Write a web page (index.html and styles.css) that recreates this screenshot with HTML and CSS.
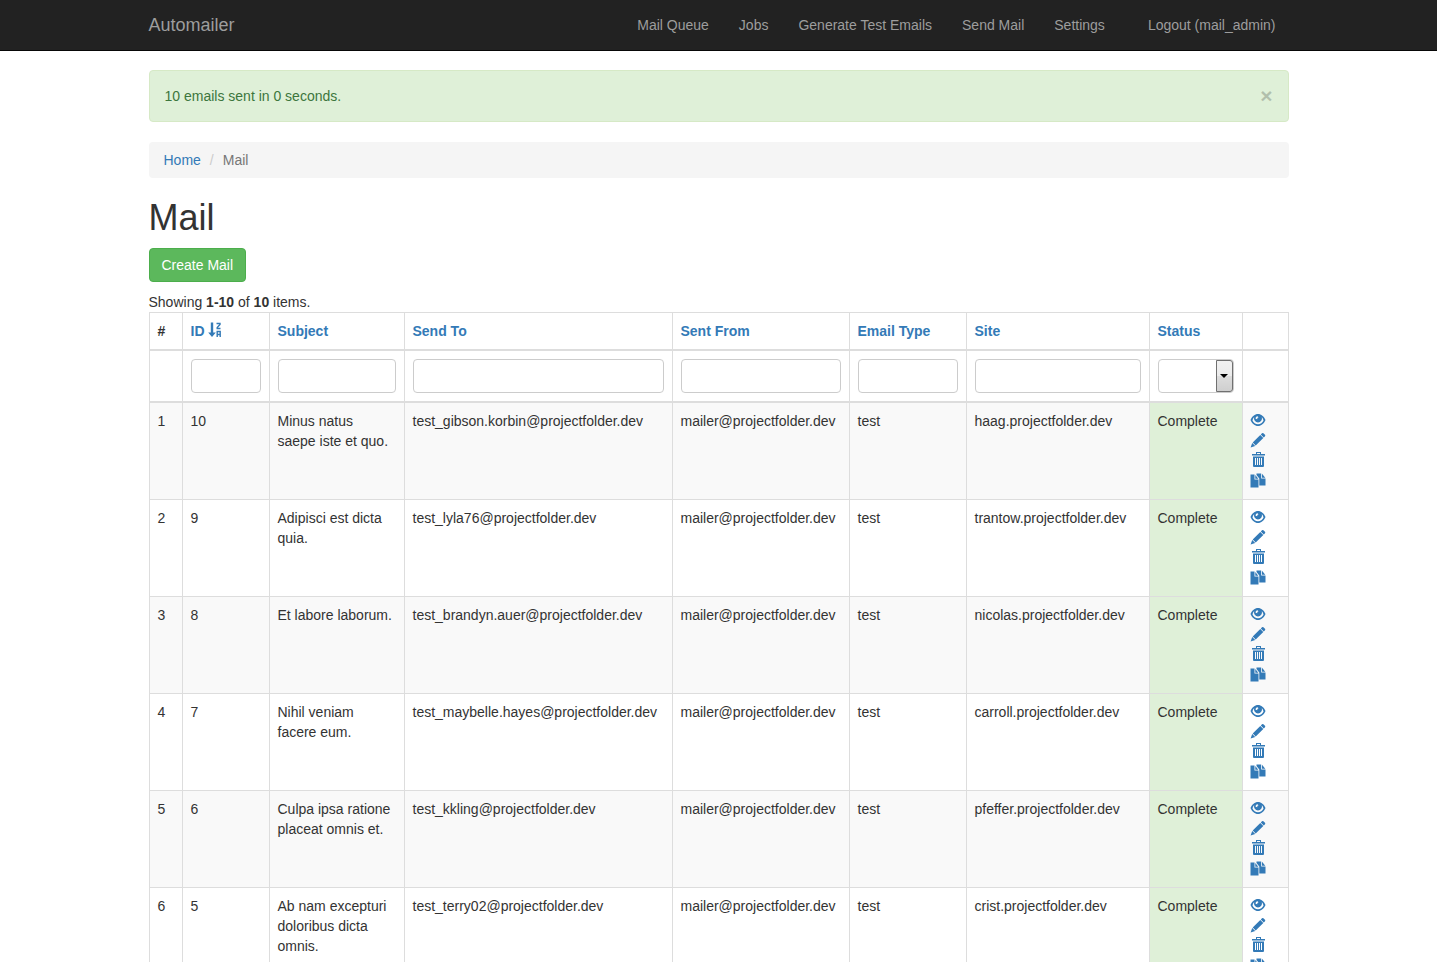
FILE: index.html
```html
<!DOCTYPE html>
<html lang="en">
<head>
<meta charset="utf-8">
<meta name="viewport" content="width=device-width, initial-scale=1">
<title>Mail</title>
<link rel="stylesheet" href="styles.css">
</head>
<body>
<svg class="sprite" aria-hidden="true">
  <symbol id="eye" viewBox="0 -1 16 16">
    <path fill-rule="evenodd" d="M0.5 7C2 3.500 4.800 1 8 1S14 3.500 15.500 7C14 10.500 11.200 13 8 13S2 10.500 0.500 7ZM2.500 7.500C3.500 9.800 5.500 11.200 8 11.200S12.500 9.800 13.500 7.500C13.200 6 12.500 4.800 11.800 4.200A4 4 0 1 1 4.200 4.200C3.500 4.800 2.800 6 2.500 7.500ZM7.500 3.200C6.300 3.400 5.500 4.400 5.600 5.700L7.200 6.200C7.200 5.300 7.700 4.600 8.600 4.300Z"/>
  </symbol>
  <symbol id="pencil" viewBox="0 -1 16 16">
    <path d="M12 0.200Q12.700 -0.400 13.400 0.200L15 1.800Q15.600 2.500 15 3.200L13.800 4.400L10.800 1.400ZM10.300 1.900L13.300 4.900L5.700 12.400L2.700 9.400ZM2.200 10L5.200 13L0.600 14.500Z"/>
  </symbol>
  <symbol id="trash" viewBox="0 0 16 16">
    <path fill-rule="evenodd" d="M6 0H11V2H15V3.500H2V2H6ZM7 1V2H10V1ZM3 4.500H14V14Q14 15 13 15H4Q3 15 3 14ZM5 6V13H6V6ZM7 6V13H8V6ZM9 6V13H10V6ZM11 6V13H12V6Z"/>
  </symbol>
  <symbol id="copy" viewBox="0 -1 16 16">
    <path d="M0.500 1.500H4.500V6.500H8.500V14.500H0.500ZM5.300 2L8.300 5.700H5.300ZM6.500 0.500H11.200V5.500H15.500V12.500H9.300V5.500L6.500 2ZM12 0.800L15.300 4.700H12Z"/>
  </symbol>
  <symbol id="sort-desc" viewBox="0 0 14 16">
    <path d="M2.800 0.500H5.200V10.500H7.800L4 15L0.200 10.500H2.800Z"/>
    <path fill="none" stroke="currentColor" stroke-width="1.400" d="M8.500 1.500H12V2.500L9.200 5.500V6.500H12.500M9.200 15V9.500H12.200V15M9.200 12.500H12.200"/>
  </symbol>
</svg>

<nav class="navbar">
  <div class="container navbar-inner">
    <a class="brand" href="#">Automailer</a>
    <ul class="nav">
      <li><a href="#">Mail Queue</a></li>
      <li><a href="#">Jobs</a></li>
      <li><a href="#">Generate Test Emails</a></li>
      <li><a href="#">Send Mail</a></li>
      <li><a href="#">Settings</a></li>
      <li><button class="logout" type="button">Logout (mail_admin)</button></li>
    </ul>
  </div>
</nav>

<main class="container">
  <div class="alert" role="status">
    <span>10 emails sent in 0 seconds.</span>
    <button class="close" type="button" aria-label="Close">×</button>
  </div>
  <ul class="breadcrumb">
    <li><a href="#">Home</a></li>
    <li>Mail</li>
  </ul>
  <h1>Mail</h1>
  <button class="create" type="button">Create Mail</button>
  <div class="summary">Showing <b>1-10</b> of <b>10</b> items.</div>
  <table class="grid">
    <colgroup>
      <col class="c-num"><col class="c-id"><col class="c-subject"><col class="c-to"><col class="c-from"><col class="c-type"><col class="c-site"><col class="c-status"><col class="c-actions">
    </colgroup>
    <thead>
      <tr>
        <th>#</th>
        <th><a href="#">ID <svg class="sort"><use href="#sort-desc"/></svg></a></th>
        <th><a href="#">Subject</a></th>
        <th><a href="#">Send To</a></th>
        <th><a href="#">Sent From</a></th>
        <th><a href="#">Email Type</a></th>
        <th><a href="#">Site</a></th>
        <th><a href="#">Status</a></th>
        <th></th>
      </tr>
      <tr class="filters">
        <td></td>
        <td><input type="text" aria-label="ID"></td>
        <td><input type="text" aria-label="Subject"></td>
        <td><input type="text" aria-label="Send To"></td>
        <td><input type="text" aria-label="Sent From"></td>
        <td><input type="text" aria-label="Email Type"></td>
        <td><input type="text" aria-label="Site"></td>
        <td><div class="select"><select aria-label="Status"><option></option></select><span class="arrow"></span></div></td>
        <td></td>
      </tr>
    </thead>
    <tbody>
      <tr><td>1</td><td>10</td><td class="subject">Minus natus saepe iste et quo.</td><td>test_gibson.korbin@projectfolder.dev</td><td>mailer@projectfolder.dev</td><td>test</td><td>haag.projectfolder.dev</td><td class="done">Complete</td>
        <td class="actions"><a href="#" aria-label="View"><svg><use href="#eye"/></svg></a><a href="#" aria-label="Update"><svg><use href="#pencil"/></svg></a><a href="#" aria-label="Delete"><svg><use href="#trash"/></svg></a><a href="#" aria-label="Copy"><svg><use href="#copy"/></svg></a></td></tr>
      <tr><td>2</td><td>9</td><td class="subject">Adipisci est dicta quia.</td><td>test_lyla76@projectfolder.dev</td><td>mailer@projectfolder.dev</td><td>test</td><td>trantow.projectfolder.dev</td><td class="done">Complete</td>
        <td class="actions"><a href="#" aria-label="View"><svg><use href="#eye"/></svg></a><a href="#" aria-label="Update"><svg><use href="#pencil"/></svg></a><a href="#" aria-label="Delete"><svg><use href="#trash"/></svg></a><a href="#" aria-label="Copy"><svg><use href="#copy"/></svg></a></td></tr>
      <tr><td>3</td><td>8</td><td class="subject">Et labore laborum.</td><td>test_brandyn.auer@projectfolder.dev</td><td>mailer@projectfolder.dev</td><td>test</td><td>nicolas.projectfolder.dev</td><td class="done">Complete</td>
        <td class="actions"><a href="#" aria-label="View"><svg><use href="#eye"/></svg></a><a href="#" aria-label="Update"><svg><use href="#pencil"/></svg></a><a href="#" aria-label="Delete"><svg><use href="#trash"/></svg></a><a href="#" aria-label="Copy"><svg><use href="#copy"/></svg></a></td></tr>
      <tr><td>4</td><td>7</td><td class="subject">Nihil veniam facere eum.</td><td>test_maybelle.hayes@projectfolder.dev</td><td>mailer@projectfolder.dev</td><td>test</td><td>carroll.projectfolder.dev</td><td class="done">Complete</td>
        <td class="actions"><a href="#" aria-label="View"><svg><use href="#eye"/></svg></a><a href="#" aria-label="Update"><svg><use href="#pencil"/></svg></a><a href="#" aria-label="Delete"><svg><use href="#trash"/></svg></a><a href="#" aria-label="Copy"><svg><use href="#copy"/></svg></a></td></tr>
      <tr><td>5</td><td>6</td><td class="subject">Culpa ipsa ratione placeat omnis et.</td><td>test_kkling@projectfolder.dev</td><td>mailer@projectfolder.dev</td><td>test</td><td>pfeffer.projectfolder.dev</td><td class="done">Complete</td>
        <td class="actions"><a href="#" aria-label="View"><svg><use href="#eye"/></svg></a><a href="#" aria-label="Update"><svg><use href="#pencil"/></svg></a><a href="#" aria-label="Delete"><svg><use href="#trash"/></svg></a><a href="#" aria-label="Copy"><svg><use href="#copy"/></svg></a></td></tr>
      <tr><td>6</td><td>5</td><td class="subject">Ab nam excepturi doloribus dicta omnis.</td><td>test_terry02@projectfolder.dev</td><td>mailer@projectfolder.dev</td><td>test</td><td>crist.projectfolder.dev</td><td class="done">Complete</td>
        <td class="actions"><a href="#" aria-label="View"><svg><use href="#eye"/></svg></a><a href="#" aria-label="Update"><svg><use href="#pencil"/></svg></a><a href="#" aria-label="Delete"><svg><use href="#trash"/></svg></a><a href="#" aria-label="Copy"><svg><use href="#copy"/></svg></a></td></tr>
    </tbody>
  </table>
</main>
</body>
</html>
```
FILE: styles.css
```css
* { box-sizing: border-box; }
body {
  margin: 0;
  background: #fff;
  color: #333;
  font: 14px/20px "Liberation Sans", Arial, sans-serif;
}
a { color: #337ab7; text-decoration: none; }
button, input, select { font: inherit; }
ul { list-style: none; margin: 0; padding: 0; }
.sprite { display: none; }
svg { fill: currentColor; }

.container {
  max-width: 1170px;
  margin: 0 auto;
  padding: 0 15px;
}

.navbar { background: #222; border-bottom: 1px solid #080808; }
.navbar-inner {
  display: flex;
  align-items: center;
  justify-content: space-between;
  min-height: 50px;
}
.navbar a, .logout { color: #9d9d9d; }
.brand { font-size: 18px; }
.nav { display: flex; }
.nav a { display: block; padding: 15px; }
.logout {
  margin-left: 15px;
  padding: 15px 13px;
  border: 0;
  background: none;
}

.alert {
  display: flex;
  justify-content: space-between;
  margin: 19px 0 20px;
  padding: 15px;
  border: 1px solid #d6e9c6;
  border-radius: 4px;
  background: #dff0d8;
  color: #3c763d;
}
.close {
  padding: 0;
  border: 0;
  background: none;
  color: #000;
  font-size: 21px;
  font-weight: 700;
  line-height: 20px;
  opacity: 0.2;
}

.breadcrumb {
  display: flex;
  margin-bottom: 20px;
  padding: 8px 15px;
  border-radius: 4px;
  background: #f5f5f5;
  color: #777;
}
.breadcrumb li + li::before {
  content: "/";
  padding: 0 9px;
  color: #ccc;
}

h1 {
  margin: 0 0 10px;
  font-size: 36px;
  font-weight: 400;
  line-height: 40px;
}
.create {
  display: block;
  margin-bottom: 10px;
  padding: 6px 12px;
  border: 1px solid #4cae4c;
  border-radius: 4px;
  background: #5cb85c;
  color: #fff;
}

.grid {
  width: 100%;
  margin-bottom: 20px;
  border-collapse: collapse;
  table-layout: fixed;
}
.c-num { width: 33px; }
.c-id { width: 87px; }
.c-subject { width: 135px; }
.c-to { width: 268px; }
.c-from { width: 177px; }
.c-type { width: 117px; }
.c-site { width: 183px; }
.c-status { width: 93px; }
.c-actions { width: 46px; }
.grid th, .grid td {
  padding: 8px;
  border: 1px solid #ddd;
  text-align: left;
  vertical-align: top;
}
.grid thead th, .grid thead td { border-bottom-width: 2px; }
.grid tbody tr:nth-child(odd) { background: #f9f9f9; }
.grid .subject { padding-right: 10px; }
.grid .done { background: #dff0d8; }
.sort { width: 14px; height: 16px; vertical-align: -2px; }

.filters input, .select {
  display: block;
  width: 100%;
  height: 34px;
  border: 1px solid #ccc;
  border-radius: 4px;
  background: #fff;
}
.filters input { padding: 6px 12px; }
.select { position: relative; }
.select select {
  width: 100%;
  height: 100%;
  border: 0;
  background: none;
  appearance: none;
}
.arrow {
  position: absolute;
  top: 0;
  right: 0;
  bottom: 0;
  display: grid;
  place-items: center;
  width: 17px;
  border: 1px solid #707070;
  border-radius: 0 3px 3px 0;
  background: linear-gradient(#f2f2f2, #ebebeb 50%, #ddd 50%, #cfcfcf);
  pointer-events: none;
}
.arrow::after {
  content: "";
  border: solid transparent;
  border-width: 4px 4px 0;
  border-top-color: #000;
}

.grid .actions { padding-left: 7px; }
.actions a { display: block; height: 20px; padding-top: 1px; }
.actions svg { display: block; width: 16px; height: 16px; }
```
